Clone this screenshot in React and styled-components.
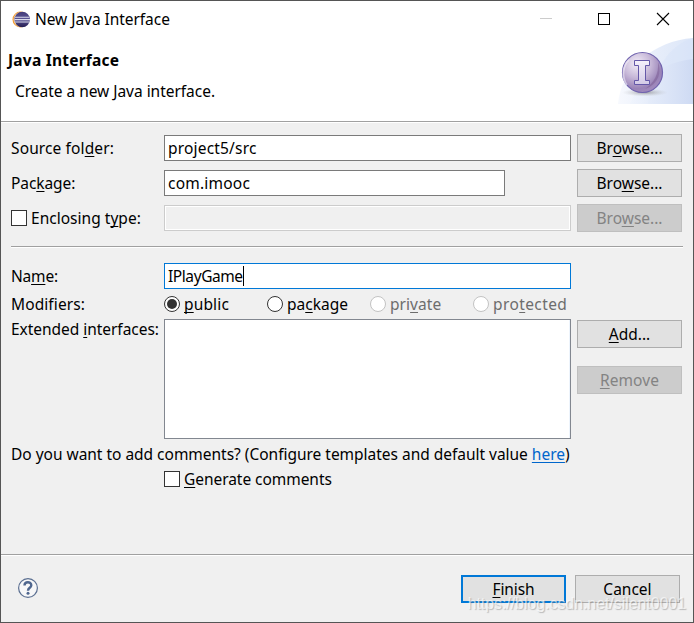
import React from "react";
import styled, { createGlobalStyle } from "styled-components";

const GlobalStyle = createGlobalStyle`
  * { box-sizing: border-box; }
  body { margin: 0; background: #f0f0f0; overflow: hidden; }
`;

const Window = styled.div`
  position: relative;
  display: flex;
  flex-direction: column;
  width: 694px;
  height: 623px;
  border: 1px solid #555;
  background: #f0f0f0;
  color: #000;
  font-family: "Noto Sans", "Open Sans", sans-serif;
  font-size: 15.5px;
  line-height: 20px;
  & > * { flex-shrink: 0; }
`;

const Text = styled.span`
  white-space: pre;
  letter-spacing: ${(p) => p.$ls || 0}px;
  font-weight: ${(p) => (p.$bold ? 700 : 400)};
`;

const Mnemonic = styled.span`
  text-decoration: underline 1px;
  text-underline-offset: 2px;
  text-decoration-skip-ink: none;
`;

const TitleBar = styled.header`
  display: flex;
  align-items: center;
  height: 37px;
  padding-left: 11px;
  background: #fff;
  svg { display: block; flex: none; }
`;

const AppTitle = styled.div`
  display: flex;
  align-items: center;
  gap: 4px;
  flex: 1;
  height: 36px;
  align-self: flex-start;
`;

const WindowControls = styled.div`
  display: flex;
  width: 176px;
  height: 37px;
`;

const Banner = styled.section`
  display: flex;
  justify-content: space-between;
  height: 83px;
  background: #fff;
`;

const BannerText = styled.div`
  display: flex;
  flex-direction: column;
  gap: 11px;
  padding: 12px 0 0 7px;
`;

const Description = styled.div`
  padding-left: 7px;
`;

const Separator = styled.div`
  height: 2px;
  flex: none;
  margin-left: ${(p) => p.$inset || 0}px;
  margin-right: ${(p) => (p.$inset ? 10 : 0)}px;
  background: #fff;
  border-top: 1px solid #a0a0a0;
`;

const Row = styled.div`
  display: grid;
  grid-template-columns: 153px 407px 105px;
  column-gap: 0;
  align-items: ${(p) => (p.$top ? "start" : "center")};
  height: ${(p) => p.$h}px;
  padding-left: 10px;
  flex: none;
  & > button { margin-left: 6px; }
`;

const FieldRows = styled.div`
  display: grid;
  row-gap: 7px;
  padding: 11px 0 14px;
`;

const NameRows = styled.div`
  padding: 11px 0 4px;
`;

const Field = styled.div`
  display: flex;
  align-items: center;
  width: ${(p) => p.$w || 407}px;
  height: 26px;
  padding-left: 3px;
  background: ${(p) => (p.$disabled ? "#f0f0f0" : "#fff")};
  border: 1px solid ${(p) => (p.$disabled ? "#ccc" : p.$focus ? "#0078d7" : "#7a7a7a")};
  box-shadow: ${(p) => (p.$disabled ? "inset 0 0 0 1px #fff" : "none")};
`;

const Caret = styled.span`
  width: 1px;
  height: 20px;
  background: #000;
`;

const Button = styled.button`
  width: 105px;
  height: 28px;
  padding: 0;
  font: inherit;
  line-height: 20px;
  color: ${(p) => (p.disabled ? "#838383" : "#000")};
  background: ${(p) => (p.disabled ? "#ccc" : "#e1e1e1")};
  border: ${(p) => (p.$primary ? "2px solid #0078d7" : `1px solid ${p.disabled ? "#bfbfbf" : "#adadad"}`)};
`;

const Option = styled.div`
  display: flex;
  align-items: center;
  gap: 4px;
  color: ${(p) => (p.$disabled ? "#6d6d6d" : "#000")};
`;

const Options = styled.div`
  display: grid;
  grid-template-columns: repeat(4, 103px);
`;

const CheckBox = styled.span`
  width: 16px;
  height: 16px;
  flex: none;
  border: 1px solid #333;
  background: #fff;
`;

const Radio = styled.span`
  display: grid;
  place-items: center;
  width: 16px;
  height: 16px;
  flex: none;
  border: 1px solid ${(p) => (p.$disabled ? "#c3c3c3" : "#333")};
  border-radius: 50%;
  background: #fff;
  &::after {
    content: "";
    width: 10px;
    height: 10px;
    border-radius: 50%;
    background: ${(p) => (p.$checked ? "#333" : "transparent")};
  }
`;

const ListBox = styled.div`
  width: 407px;
  height: 120px;
  border: 1px solid #828790;
  background: #fff;
  box-shadow: inset -1px 0 0 #edf4fc;
`;

const ListButtons = styled.div`
  display: flex;
  flex-direction: column;
  gap: 18px;
  padding: 1px 0 0 6px;
`;

const Comments = styled.div`
  display: flex;
  flex-direction: column;
  gap: 5px;
  height: 115px;
  padding: 5px 0 0 10px;
`;

const CommentOption = styled(Option)`
  padding-left: 153px;
`;

const Link = styled.span`
  color: #0066cc;
  text-decoration: underline 1px;
  text-underline-offset: 2px;
`;

const Footer = styled.footer`
  display: flex;
  align-items: center;
  justify-content: space-between;
  height: 66px;
  padding: 0 13px 0 16px;
  & > svg { margin-bottom: 2px; }
`;

const FooterButtons = styled.div`
  display: flex;
  gap: 9px;
`;

const Watermark = styled.div`
  position: absolute;
  right: 7px;
  bottom: 8px;
  color: rgba(255, 255, 255, 0.65);
  text-shadow: 1px 1px 1px rgba(120, 120, 120, 0.45);
  font: 16px/20px "Liberation Sans", sans-serif;
  letter-spacing: ${(p) => p.$ls}px;
  white-space: nowrap;
  pointer-events: none;
`;

function EclipseIcon() {
  return (
    <svg width="19" height="18" viewBox="0 0 19 18">
      <defs>
        <linearGradient id="ecl" x1="0" y1="0" x2="0" y2="1">
          <stop offset="0" stopColor="#443c79" />
          <stop offset=".5" stopColor="#5a5594" />
          <stop offset="1" stopColor="#241b50" />
        </linearGradient>
      </defs>
      <circle cx="8.4" cy="9.5" r="7.9" fill="#f29a31" />
      <circle cx="9.2" cy="9.5" r="7.6" fill="#f8dfb7" />
      <circle cx="10.2" cy="9.5" r="7.8" fill="url(#ecl)" />
      <path d="M3 7.2h14.5M2.5 9.6h15.5M3 12h14.5" stroke="#dcdceb" strokeWidth="1.1" />
    </svg>
  );
}

function ControlIcons() {
  return (
    <svg width="176" height="37" viewBox="0 0 176 37" fill="none" shapeRendering="crispEdges">
      <path d="M23 17.5h12" stroke="#ccc" />
      <rect x="81.5" y="12.5" width="11" height="11" stroke="#000" />
      <path d="M140 12l12 12M152 12l-12 12" stroke="#000" strokeWidth="1.1" shapeRendering="auto" />
    </svg>
  );
}

function InterfaceBanner() {
  return (
    <svg width="75" height="66" viewBox="0 0 75 66">
      <defs>
        <linearGradient id="sweep">
          <stop offset="0" stopColor="#f7f9fe" />
          <stop offset=".55" stopColor="#e6edfa" />
          <stop offset="1" stopColor="#dce6f8" />
        </linearGradient>
        <linearGradient id="sweepInner">
          <stop offset="0" stopColor="#eff4fd" stopOpacity=".7" />
          <stop offset="1" stopColor="#cedaf3" />
        </linearGradient>
        <radialGradient id="orb" cx=".36" cy=".28" r=".78">
          <stop offset="0" stopColor="#f3eef8" />
          <stop offset=".45" stopColor="#c7b8d8" />
          <stop offset=".8" stopColor="#9983b7" />
          <stop offset="1" stopColor="#a48dc0" />
        </radialGradient>
        <radialGradient id="shade">
          <stop offset="0" stopColor="#777" stopOpacity=".65" />
          <stop offset="1" stopColor="#bbb" stopOpacity="0" />
        </radialGradient>
        <linearGradient id="letter" x1="0" y1="0" x2="0" y2="1">
          <stop offset="0" stopColor="#f4f0fa" />
          <stop offset="1" stopColor="#d3cae6" />
        </linearGradient>
      </defs>
      <path d="M0 66C3 30 36 3 75 0V66Z" fill="url(#sweep)" />
      <path d="M30 66C34 33 52 6 75 0V66Z" fill="#d5e1f7" opacity=".4" />
      <path d="M12 66C23 39 47 24 75 21V66Z" fill="url(#sweepInner)" />
      <ellipse cx="27" cy="54.5" rx="23" ry="4" fill="url(#shade)" />
      <circle cx="24.5" cy="34.5" r="20" fill="url(#orb)" stroke="#7063ae" strokeWidth="1.2" />
      <path d="M9 47C3 39 5 27 11 22" fill="none" stroke="#eee8f5" strokeWidth="1.8" opacity=".7" />
      <path d="M40 24C45 37 37 48 27 51C36 45 41 36 40 24Z" fill="#806297" opacity=".6" />
      <path d="M16.5 22.5H31.5V27.5H27.5V42.5H31.5V46.5H16.5V42.5H20.5V27.5H16.5Z" fill="url(#letter)" stroke="#6558a8" />
    </svg>
  );
}

function HelpIcon() {
  return (
    <svg width="22" height="22" viewBox="0 0 22 22" fill="none">
      <circle cx="11" cy="11" r="9.4" fill="#f7f7f8" stroke="#5b6f91" strokeWidth="1.2" />
      <path d="M7.5 8.4C7.5 4.2 14.3 4.2 14.3 8.2C14.3 10.8 11 10.7 11 13.7" stroke="#50678f" strokeWidth="2.4" />
      <circle cx="11" cy="16.3" r="1.5" fill="#50678f" />
    </svg>
  );
}

/* Renders a caption; the character after "&" is the keyboard mnemonic. */
function Caption({ children, ls, bold }) {
  const at = children.indexOf("&");
  return (
    <Text $ls={ls} $bold={bold}>
      {at < 0 ? children : (
        <>{children.slice(0, at)}<Mnemonic>{children[at + 1]}</Mnemonic>{children.slice(at + 2)}</>
      )}
    </Text>
  );
}

const modifiers = [
  { text: "&public", checked: true, ls: 0.15 },
  { text: "pa&ckage", ls: 0 },
  { text: "pri&vate", disabled: true, ls: 0.05 },
  { text: "pro&tected", disabled: true, ls: 0.4 },
];

export default function App() {
  return (
    <>
      <GlobalStyle />
      <Window>
        <TitleBar>
          <AppTitle><EclipseIcon /><Caption ls={-0.05}>New Java Interface</Caption></AppTitle>
          <WindowControls><ControlIcons /></WindowControls>
        </TitleBar>
        <Banner>
          <BannerText>
            <Caption bold ls={0.22}>Java Interface</Caption>
            <Description><Caption ls={-0.03}>Create a new Java interface.</Caption></Description>
          </BannerText>
          <InterfaceBanner />
        </Banner>
        <Separator />
        <FieldRows>
          <Row $h={28}>
            <Caption ls={0.12}>Source fol&der:</Caption>
            <Field><Caption ls={0.18}>project5/src</Caption></Field>
            <Button><Caption>Br&owse...</Caption></Button>
          </Row>
          <Row $h={28}>
            <Caption ls={-0.08}>Pac&kage:</Caption>
            <Field $w={341}><Caption ls={0.22}>com.imooc</Caption></Field>
            <Button><Caption>Bro&wse...</Caption></Button>
          </Row>
          <Row $h={28}>
            <Option><CheckBox /><Caption ls={0.02}>Enclosing t&ype:</Caption></Option>
            <Field $disabled />
            <Button disabled><Caption>Bro&wse...</Caption></Button>
          </Row>
        </FieldRows>
        <Separator $inset={10} />
        <NameRows>
          <Row $h={34}>
            <Caption ls={-0.2}>Na&me:</Caption>
            <Field $focus><Caption ls={-0.42}>IPlayGame</Caption><Caret /></Field>
          </Row>
          <Row $h={22}>
            <Caption ls={0.1}>Modifiers:</Caption>
            <Options>
              {modifiers.map((m) => (
                <Option key={m.text} $disabled={m.disabled}>
                  <Radio $checked={m.checked} $disabled={m.disabled} /><Caption ls={m.ls}>{m.text}</Caption>
                </Option>
              ))}
            </Options>
          </Row>
        </NameRows>
        <Row $h={120} $top>
          <Caption ls={-0.04}>Extended &interfaces:</Caption>
          <ListBox />
          <ListButtons>
            <Button><Caption>&Add...</Caption></Button>
            <Button disabled><Caption ls={0.1}>&Remove</Caption></Button>
          </ListButtons>
        </Row>
        <Comments>
          <Text $ls={-0.02}>Do you want to add comments? (Configure templates and default value <Link>here</Link>)</Text>
          <CommentOption><CheckBox /><Caption ls={-0.05}>&Generate comments</Caption></CommentOption>
        </Comments>
        <Separator />
        <Footer>
          <HelpIcon />
          <FooterButtons>
            <Button $primary><Caption ls={-0.1}>&Finish</Caption></Button>
            <Button><Caption>Cancel</Caption></Button>
          </FooterButtons>
        </Footer>
        <Watermark $ls={-0.07}>https://blog.csdn.net/silent0001</Watermark>
      </Window>
    </>
  );
}
